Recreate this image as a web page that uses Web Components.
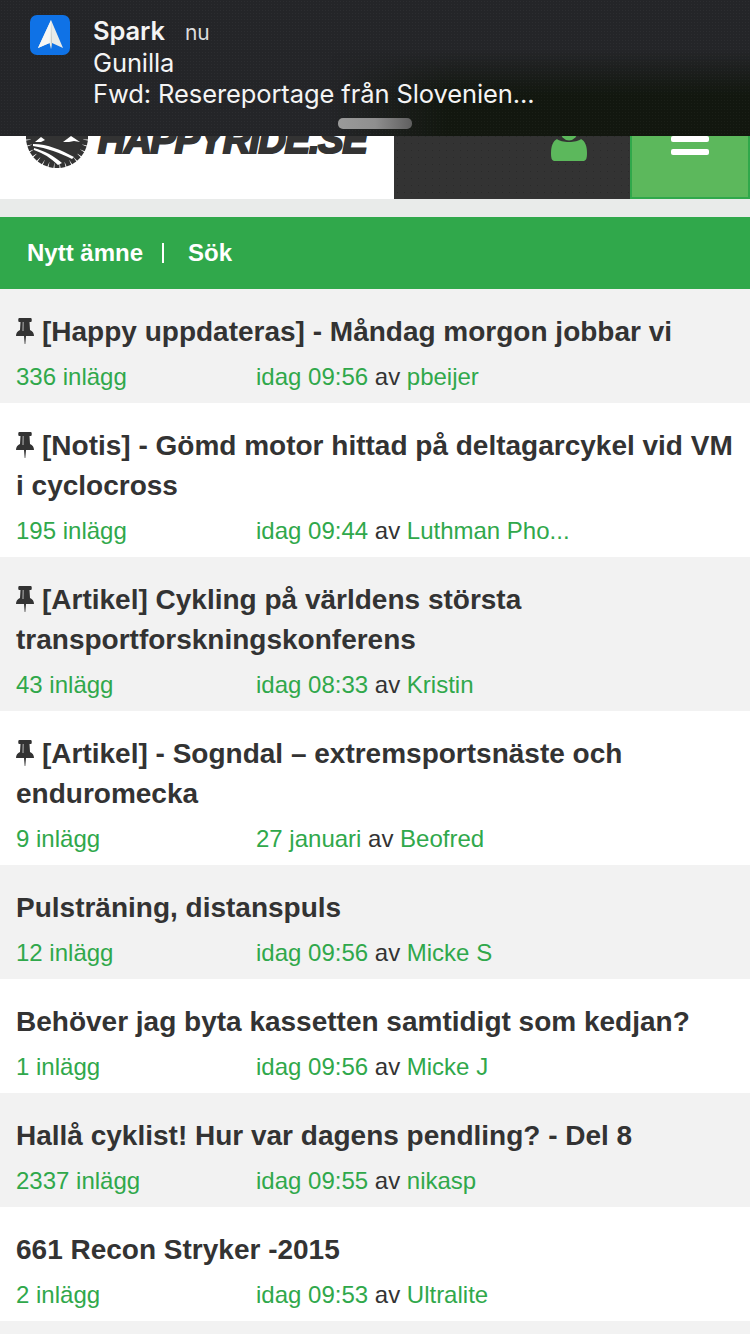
<!DOCTYPE html>
<html lang="sv">
<head>
<meta charset="utf-8">
<title>Happyride</title>
<style>
  html, body { margin: 0; padding: 0; background: #f2f2f2; }
  body { width: 750px; height: 1334px; overflow: hidden; position: relative; font-family: "Liberation Sans", Arial, sans-serif; }
</style>
</head>
<body>
<ios-banner app="Spark" when="nu" from="Gunilla" subject="Fwd: Resereportage från Slovenien..."></ios-banner>
<site-header></site-header>
<action-bar></action-bar>
<topic-list>
  <topic-row pinned posts="336 inlägg" date="idag 09:56" user="pbeijer">[Happy uppdateras] - Måndag morgon jobbar vi</topic-row>
  <topic-row pinned alt posts="195 inlägg" date="idag 09:44" user="Luthman Pho...">[Notis] - Gömd motor hittad på deltagarcykel vid VM i cyclocross</topic-row>
  <topic-row pinned posts="43 inlägg" date="idag 08:33" user="Kristin">[Artikel] Cykling på världens största transportforskningskonferens</topic-row>
  <topic-row pinned alt posts="9 inlägg" date="27 januari" user="Beofred">[Artikel] - Sogndal – extremsportsnäste och enduromecka</topic-row>
  <topic-row posts="12 inlägg" date="idag 09:56" user="Micke S">Pulsträning, distanspuls</topic-row>
  <topic-row alt posts="1 inlägg" date="idag 09:56" user="Micke J">Behöver jag byta kassetten samtidigt som kedjan?</topic-row>
  <topic-row posts="2337 inlägg" date="idag 09:55" user="nikasp">Hallå cyklist! Hur var dagens pendling? - Del 8</topic-row>
  <topic-row alt posts="2 inlägg" date="idag 09:53" user="Ultralite">661 Recon Stryker -2015</topic-row>
</topic-list>

<script>
class IosBanner extends HTMLElement {
  constructor() {
    super();
    this.attachShadow({ mode: 'open' }).innerHTML = `
      <style>
        :host { position: absolute; left: 0; top: 0; width: 750px; height: 136px; z-index: 10; display: block;
          font-family: Inter, "Noto Sans", sans-serif; color: #f4f4f4; overflow: hidden; background: #242528; }
        /* the darker lower right part of the blurred backdrop */
        .shade { position: absolute; inset: 0;
          background: linear-gradient(180deg, transparent 52px, #12170f 96px);
          -webkit-mask-image: linear-gradient(90deg, transparent 330px, #000 450px);
          mask-image: linear-gradient(90deg, transparent 330px, #000 450px); }
        .dots { position: absolute; inset: 0; background-image: radial-gradient(rgba(255,255,255,.035) .6px, transparent 1px); background-size: 3px 3px; }
        .wrap { position: relative; display: flex; padding: 15px 0 0 30px; gap: 23px; }
        .icon { width: 40px; height: 40px; flex: none; }
        .text { font-size: 25.5px; line-height: 31.5px; letter-spacing: -.1px; }
        b { font-weight: 600; }
        .when { font-size: 21px; line-height: 1; margin-left: 20px; color: #ddd; }
        .pill { position: absolute; left: 338px; top: 118px; width: 74px; height: 11px; border-radius: 5px;
          background: linear-gradient(90deg, #9a9a9a 0%, #8f8f8f 50%, #5f5f5f 100%); }
      </style>
      <div class="shade"></div>
      <div class="dots"></div>
      <div class="wrap">
        <svg class="icon" viewBox="0 0 40 40">
          <rect width="40" height="40" rx="7" fill="#0f72e6"/>
          <path d="M21 5 L33 33 L22 28 L21 34 L19.5 28 L8 33 Z" fill="#e9ebe8"/>
          <path d="M21 5 L22 28 L21 34 Z" fill="#c4c8c4"/>
          <path d="M21 5 L19.5 28 L8 33 Z" fill="#f7f7f5"/>
        </svg>
        <div class="text">
          <div><b></b><span class="when"></span></div>
          <div class="from"></div>
          <div class="subject"></div>
        </div>
      </div>
      <div class="pill"></div>`;
  }
  connectedCallback() {
    const r = this.shadowRoot;
    r.querySelector('b').textContent = this.getAttribute('app');
    r.querySelector('.when').textContent = this.getAttribute('when');
    r.querySelector('.from').textContent = this.getAttribute('from');
    r.querySelector('.subject').textContent = this.getAttribute('subject');
  }
}
customElements.define('ios-banner', IosBanner);

class SiteHeader extends HTMLElement {
  constructor() {
    super();
    // cog teeth for the logo
    let teeth = '';
    for (let i = 0; i < 32; i++) {
      teeth += `<rect x="-2.5" y="-31" width="5" height="6" fill="#333" transform="rotate(${i * 11.25})"/>`;
    }
    this.attachShadow({ mode: 'open' }).innerHTML = `
      <style>
        :host { display: flex; height: 199px; }
        .logo { width: 394px; background: #fff; position: relative; overflow: hidden; }
        .cog { position: absolute; left: 26px; top: 106px; width: 62px; height: 62px; }
        .name { position: absolute; left: 98px; top: 117px; font: italic 700 38px/46px "Liberation Sans", Arial, sans-serif;
          color: #333; -webkit-text-stroke: 2.2px #333; white-space: nowrap; letter-spacing: -1.2px; }
        .user { width: 236px; background-color: #333; position: relative;
          background-image: radial-gradient(#2a2a2a .7px, transparent 1px); background-size: 7px 7px; }
        .user svg { position: absolute; left: 157px; top: 128px; width: 36px; height: 33px; }
        .menu { width: 120px; box-sizing: border-box; background: #5cb85c; border: 2px solid #30a84b; position: relative; }
        .menu i { position: absolute; left: 39px; width: 38px; height: 6px; border-radius: 2px; background: #fff; }
      </style>
      <div class="logo">
        <svg class="cog" viewBox="-31 -31 62 62">
          <circle r="26.5" fill="#333"/>${teeth}
          <path d="M-22 5 L-16 0 L-12 3 L-16 5 Z M6 5 L14 -1 L23 5 L17 4 L12 5 Z" fill="#fff"/>
          <path d="M-24 7 C-9 7 4 13 17 20 L15 22 C3 16 -10 11 -24 9 Z" fill="#fff"/>
          <path d="M-23 11 C-12 14 -3 19 5 26 L1 28 C-6 21 -14 16 -23 13 Z" fill="#fff"/>
        </svg>
        <span class="name">HAPPYRIDE.SE</span>
      </div>
      <div class="user">
        <svg viewBox="0 0 36 33">
          <ellipse cx="18" cy="2.500" rx="9" ry="10" fill="#5cb85c"/>
          <path d="M6 11 C10 15 26 15 30 11 C34 13 36 18 36 25 C36 31 35 33 32 33 L4 33 C1 33 0 31 0 25 C0 18 2 13 6 11 Z" fill="#5cb85c"/>
        </svg>
      </div>
      <div class="menu"><i style="top:134px"></i><i style="top:147px"></i></div>`;
  }
}
customElements.define('site-header', SiteHeader);

class ActionBar extends HTMLElement {
  constructor() {
    super();
    this.attachShadow({ mode: 'open' }).innerHTML = `
      <style>
        :host { display: flex; align-items: center; height: 72px; margin-top: 18px; padding-left: 27px; background: #30a84b;
          color: #fff; font: 700 24px "Liberation Sans", Arial, sans-serif; box-shadow: 0 -18px 0 #e9ebea; }
        i { width: 2px; height: 20px; background: #fff; margin: 0 24px 0 19px; }
      </style>
      <span>Nytt ämne</span><i></i><span>Sök</span>`;
  }
}
customElements.define('action-bar', ActionBar);

class TopicList extends HTMLElement {
  constructor() {
    super();
    this.attachShadow({ mode: 'open' }).innerHTML = `
      <style>:host { display: block; background: #f2f2f2; }</style><slot></slot>`;
  }
}
customElements.define('topic-list', TopicList);

class TopicRow extends HTMLElement {
  constructor() {
    super();
    this.attachShadow({ mode: 'open' }).innerHTML = `
      <style>
        :host { display: block; padding: 23px 16px 9px; background: #f2f2f2; color: #333;
          font-family: "Liberation Sans", Arial, sans-serif; }
        :host([alt]) { background: #fff; }
        .title { font-size: 28px; font-weight: 700; line-height: 40px; }
        .pin { display: none; width: 18px; height: 26px; margin-right: 8px; vertical-align: -3px; }
        :host([pinned]) .pin { display: inline-block; }
        .meta { display: flex; font-size: 24px; line-height: 34px; margin-top: 8px; height: 34px; }
        .posts { width: 240px; flex: none; }
        .green { color: #30a84b; }
      </style>
      <div class="title"><svg class="pin" viewBox="0 0 18 26"><path d="M3 0 H15 C16 0 16 4 15 4 H13.500 L14 12 C16.500 13 18 15 18 18 H10 L9.300 26 H8.700 L8 18 H0 C0 15 1.500 13 4 12 L4.500 4 H3 C2 4 2 0 3 0 Z" fill="#333"/><path d="M6.500 4 H8 L7.800 13 H6.200 Z" fill="#888"/></svg><slot></slot></div>
      <div class="meta">
        <span class="posts green"></span>
        <span><span class="date green"></span> av <span class="user green"></span></span>
      </div>`;
  }
  connectedCallback() {
    const r = this.shadowRoot;
    r.querySelector('.posts').textContent = this.getAttribute('posts');
    r.querySelector('.date').textContent = this.getAttribute('date');
    r.querySelector('.user').textContent = this.getAttribute('user');
  }
}
customElements.define('topic-row', TopicRow);
</script>
</body>
</html>
